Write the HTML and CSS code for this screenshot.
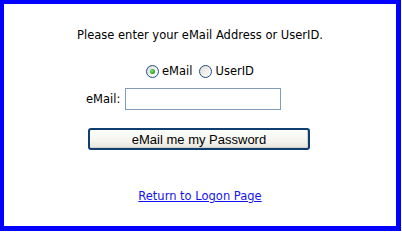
FILE: index.html
```html
<!DOCTYPE html>
<html>
<head>
<meta charset="utf-8">
<link rel="stylesheet" href="styles.css">
</head>
<body>
<div class="frame">
  <p class="intro">Please enter your eMail Address or UserID.</p>
  <div class="radios">
    <label class="opt"><input type="radio" name="kind" class="radio" checked><span>eMail</span></label>
    <label class="opt"><input type="radio" name="kind" class="radio"><span>UserID</span></label>
  </div>
  <div class="field">
    <label class="field-label" for="em">eMail:</label>
    <input id="em" type="text" class="text-input">
  </div>
  <button class="btn" type="button">eMail me my Password</button>
  <a class="back" href="#">Return to Logon Page</a>
</div>
</body>
</html>
```

FILE: styles.css
```css
html, body {
  margin: 0;
  padding: 0;
  background: #ffffff;
}

.frame {
  box-sizing: border-box;
  width: 401px;
  height: 231px;
  border-style: solid;
  border-color: #0000ff;
  border-width: 4px 5px 5px 4px;
  display: flex;
  flex-direction: column;
  align-items: center;
  font-family: "DejaVu Sans", Verdana, sans-serif;
  font-size: 11.5px;
  line-height: 13px;
  color: #000000;
}

.intro {
  margin: 25px 0 0 0;
}

.radios {
  margin-top: 22px;
  height: 15px;
  display: flex;
  align-items: center;
  gap: 7px;
}

.opt {
  display: flex;
  align-items: center;
  gap: 3px;
}

.radio {
  appearance: none;
  -webkit-appearance: none;
  margin: 0;
  width: 13px;
  height: 13px;
  box-sizing: border-box;
  border: 1px solid #1c5180;
  border-radius: 50%;
  background: linear-gradient(135deg, #dcdbd5 0%, #f4f3ef 60%, #ffffff 100%);
  position: relative;
}

.radio:checked::after {
  content: "";
  position: absolute;
  left: 3px;
  top: 3px;
  width: 5px;
  height: 5px;
  border-radius: 50%;
  background: radial-gradient(circle at 40% 40%, #8be58b 0%, #2fa82f 55%, #1c8a1c 100%);
}

.field {
  align-self: flex-start;
  margin: 9px 0 0 82px;
  display: flex;
  align-items: center;
  gap: 5px;
}

.text-input {
  box-sizing: border-box;
  width: 156px;
  height: 22px;
  margin: 0;
  border: 1px solid #7f9db9;
  background: #ffffff;
  padding: 0 3px;
  font: inherit;
}

.btn {
  margin: 18px 2px 0 0;
  box-sizing: border-box;
  width: 222px;
  height: 22px;
  padding: 0;
  border: 2px solid #0f3f70;
  border-radius: 3px;
  background: linear-gradient(#fdfdfb 0%, #f5f4ef 60%, #e6e4dc 100%);
  box-shadow: inset -1px -1px 0 #d6d3c8;
  font-family: "Liberation Sans", Arial, sans-serif;
  font-size: 13px;
  color: #000000;
}

.back {
  margin-top: 40px;
  color: #1414f0;
  text-decoration: underline;
}
```
